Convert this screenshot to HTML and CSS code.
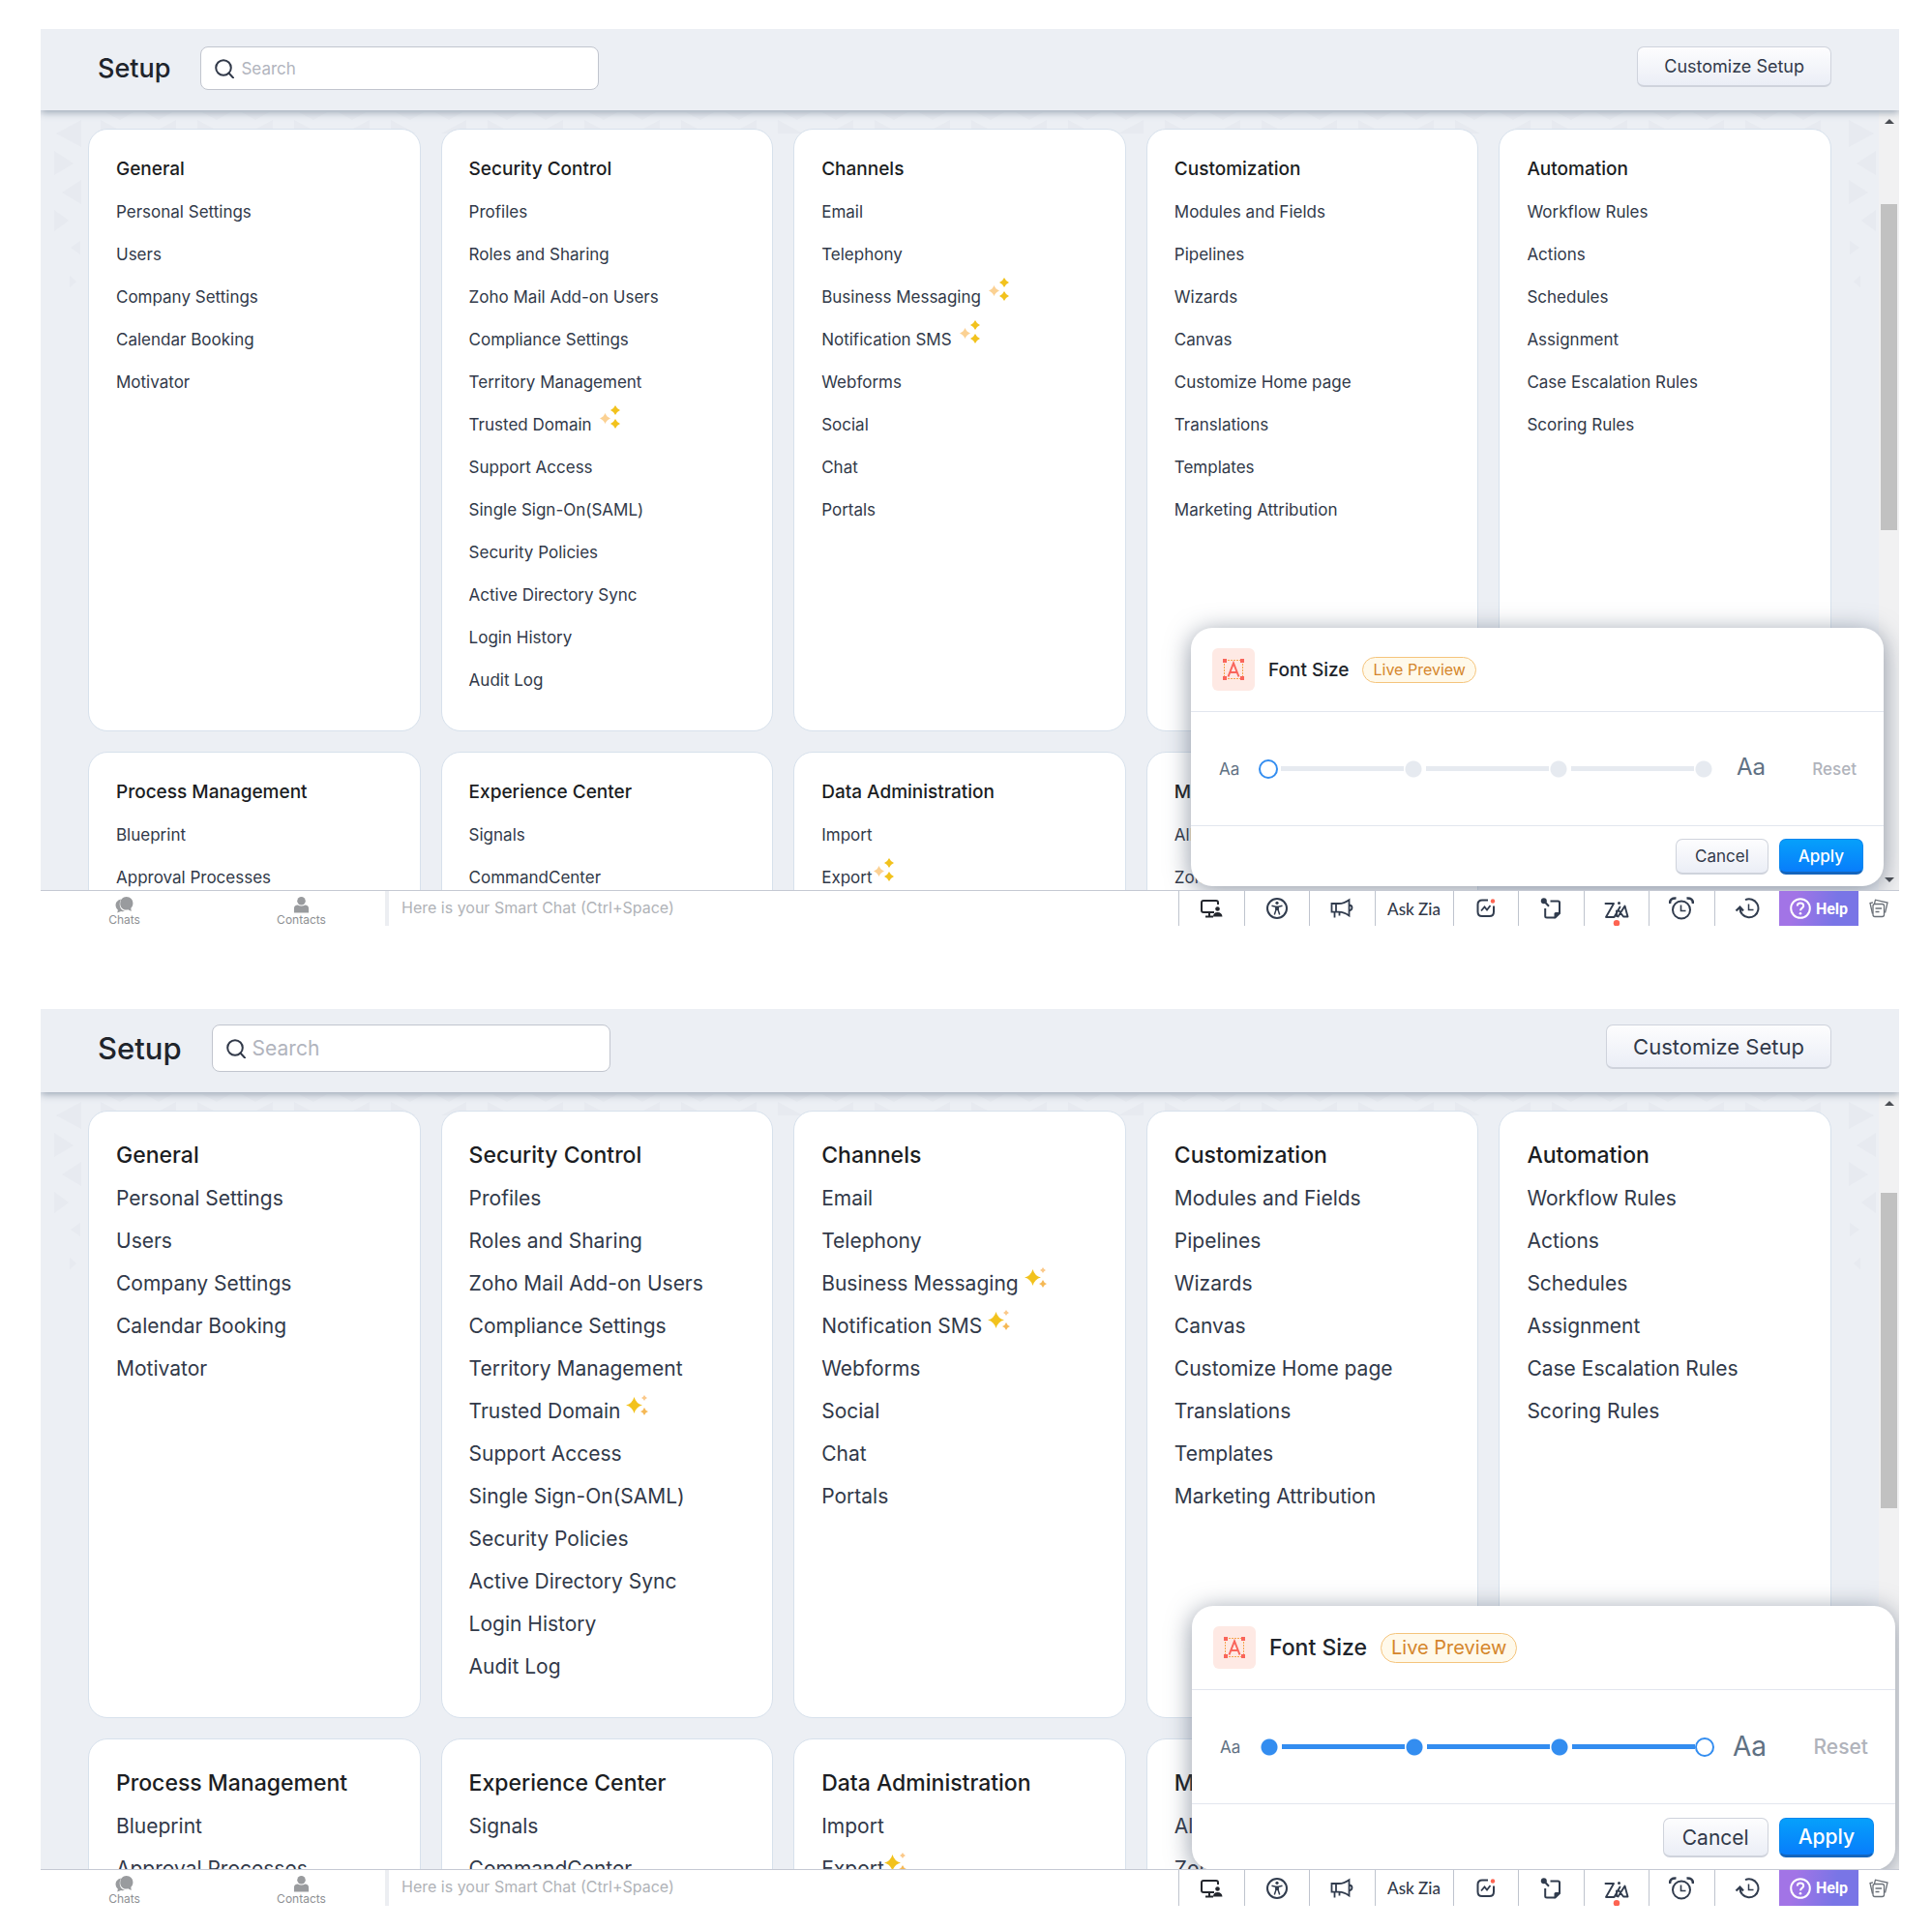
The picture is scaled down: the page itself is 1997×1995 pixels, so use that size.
FILE: index.html
```html
<!DOCTYPE html>
<html lang="en">
<head>
<meta charset="utf-8">
<meta name="viewport" content="width=device-width, initial-scale=1">
<title>Setup</title>
<link rel="stylesheet" href="styles.css">
</head>
<body>
<svg class="defs" aria-hidden="true">
  <symbol id="i-search" viewBox="0 0 20 20"><g fill="none" stroke="currentColor" stroke-width="2"><circle cx="9" cy="9" r="7.8"/><path d="M14.5 14.5 19 19.4" stroke-linecap="round"/></g></symbol>
  <symbol id="i-spark-s" viewBox="0 0 21 25"><path fill="#fbd193" d="M5.500 8Q7 12 11 13.500 7 15 5.500 19 4 15 0 13.500 4 12 5.500 8Z"/><path fill="#f2c21d" d="M16 0Q17.500 3.500 21 5 17.500 6.500 16 10 14.500 6.500 11 5 14.500 3.500 16 0ZM16 14Q17.500 17.500 21 19 17.500 20.500 16 24 14.500 20.500 11 19 14.500 17.500 16 14Z"/></symbol>
  <symbol id="i-spark-l" viewBox="0 0 23 21"><path fill="#f2c21d" d="M8.500 2Q10.500 9 17 10.500 10.500 12 8.500 19 6.500 12 0 10.500 6.500 9 8.500 2Z"/><path fill="#fbc98a" d="M19 0Q19.800 2.200 22 3 19.800 3.800 19 6 18.200 3.800 16 3 18.200 2.200 19 0Z"/><path fill="#f5b855" d="M19 13Q20 16 23 17 20 18 19 21 18 18 15 17 18 16 19 13Z"/></symbol>
  <symbol id="i-font" viewBox="0 0 44 44"><path d="M12.500 13v18M31.500 13v18M13 12.500h18M13 31.500h18" stroke="#f5a64e" stroke-width="1" stroke-dasharray="2 1" fill="none"/><path d="M16.500 29.500 22 15.500 27.500 29.500M18.200 25h7.600" fill="none" stroke="#f9655b" stroke-width="2"/><path fill="#f9655b" d="M11 11h4v4h-4zM29 11h4v4h-4zM11 29h4v4h-4zM29 29h4v4h-4z"/></symbol>
  <symbol id="i-chats" viewBox="0 0 22 20"><path fill="#999b9e" d="M7 3C2 4 0 8 .6 11.500 1 13.500 2 15 3.200 16L2.500 19.500 7 17.600C9 18 10.500 17.800 11.500 17.300 5 16 4 8 7 3Z"/><path fill="#999b9e" d="M13.500 0C18.500 0 21.500 3.500 21.500 8 21.500 10.500 20.500 12.500 19 13.800L19.500 17.500 15.500 15.700C9 17 6 12.500 6 8.500 6 3.500 9 0 13.500 0Z"/></symbol>
  <symbol id="i-contact" viewBox="0 0 18 18"><circle cx="9" cy="4.500" r="4.500" fill="#999b9e"/><path fill="#999b9e" d="M1 17.500V13Q1 9 5 9 9 11 13 9 17 9 17 13V17.500Z"/></symbol>
  <symbol id="i-screen" viewBox="0 0 24 20"><path d="M15 14H4Q2 14 2 12V4Q2 2 4 2H17Q19 2 19 4V6M10 14v4M6 18.500h8" fill="none" stroke="#23262d" stroke-width="2"/><circle cx="18.500" cy="10.500" r="2.300" fill="#23262d"/><path d="M14 18.500Q14 14 18.500 14T23.500 18.500Z" fill="#23262d"/></symbol>
  <symbol id="i-access" viewBox="0 0 24 24"><circle cx="12" cy="12" r="10" fill="none" stroke="#313c4e" stroke-width="2"/><circle cx="12" cy="6.300" r="1.600" fill="#313c4e"/><path d="M6.500 9.300 10.500 10.200h3L17.500 9.300M10.800 10.500V14L9.300 18.500M13.200 10.500V14L14.700 18.500M12 10.500V14" fill="none" stroke="#313c4e" stroke-width="1.500"/></symbol>
  <symbol id="i-horn" viewBox="0 0 24 22"><path d="M1.500 6H9Q14 6 19.500 2.200V18.500Q14 14.700 9 14.700H1.500ZM6 6v8.500M4.500 15v5.500M9.500 15v3.500M20 7.500Q22.500 8 22.500 10.300T20 13.300" fill="none" stroke="#313c4e" stroke-width="1.800"/></symbol>
  <symbol id="i-chart" viewBox="0 0 22 22"><path d="M13 2.500H7Q2.500 2.500 2.500 7V14.500Q2.500 19 7 19H14.500Q19 19 19 14.500V8.500" fill="none" stroke="#313c4e" stroke-width="2"/><path d="M6 13.500 9.500 9.500 12 12.500 15.500 8" fill="none" stroke="#313c4e" stroke-width="1.800"/><circle cx="18" cy="3.500" r="2.200" fill="#fd6452"/></symbol>
  <symbol id="i-note" viewBox="0 0 22 24"><circle cx="3.800" cy="4.300" r="3" fill="#313c4e"/><path d="M4 4.500 9 9.800M10.500 4.500H18.500Q20 4.500 20 6V17L15.500 21.500H7Q5.200 21.500 5.200 20V12" fill="none" stroke="#313c4e" stroke-width="2"/><path d="M14.500 22.500V17.500Q14.500 16 16 16H21Z" fill="#313c4e"/></symbol>
  <symbol id="i-zia" viewBox="0 0 26 26"><path d="M1.500 3H10L2 17H10.500L16.500 6.500M13 10.500V16M14.500 16.500 21.500 5.500 24.500 16.500H20L15.500 10.500" fill="none" stroke="#313c4e" stroke-width="1.900" stroke-linejoin="round" stroke-linecap="round"/><circle cx="15.500" cy="2.500" r="1.500" fill="#313c4e"/><circle cx="13" cy="23.300" r="3.200" fill="#fd6452"/></symbol>
  <symbol id="i-alarm" viewBox="0 0 26 24"><circle cx="13" cy="13.500" r="9" fill="none" stroke="#313c4e" stroke-width="2"/><path d="M12.500 8.500V14.500H17.500" fill="none" stroke="#313c4e" stroke-width="1.600"/><path d="M1 7Q1 1 7.500 1.500M25 7Q25 1 18.500 1.500" fill="none" stroke="#313c4e" stroke-width="2.600"/></symbol>
  <symbol id="i-history" viewBox="0 0 26 24"><path d="M11 3.200A9.500 9.500 0 1 1 8 18.300" fill="none" stroke="#313c4e" stroke-width="2"/><path d="M14.500 7.500V13.500H19.500" fill="none" stroke="#313c4e" stroke-width="1.500"/><path d="M1.500 14.500 5.500 10.500 9 14.500M5.500 11.500Q5.500 15.500 8 18.300" fill="none" stroke="#313c4e" stroke-width="2.200"/></symbol>
  <symbol id="i-help" viewBox="0 0 22 22"><circle cx="11" cy="11" r="9.800" fill="none" stroke="#fff" stroke-width="2"/><path d="M7.800 8.500Q7.800 5.500 11 5.500T14.200 8.500C14.200 10.700 11 10.700 11 13.300" fill="none" stroke="#fff" stroke-width="2"/><circle cx="11" cy="16.200" r="1.300" fill="#fff"/></symbol>
  <symbol id="i-cards" viewBox="0 0 20 20"><g fill="none" stroke="#6a7078" stroke-width="1.300"><path d="M3.500 15.500 1 4.500 4 3.800M16.500 14.500 19 4 6.500 1.200 5.500 5"/><rect x="4" y="5.500" width="11.500" height="13" rx="2"/><path d="M6.500 10h6.500M6.500 13.500h4"/></g></symbol>
  <pattern id="tri-top" width="100" height="26" patternUnits="userSpaceOnUse"><path fill="#e7eaf0" d="M20 10 46 24H20ZM98 10V24H72ZM25 2H54L40 10ZM66 2H94L80 10Z"/></pattern>
  <symbol id="tri-side" viewBox="0 0 40 190"><path fill="#e7eaf0" d="M30 10V38L4 24ZM2 42 22 55 2 67ZM30 72V97L10 85ZM2 103 17 114 2 125ZM29 135V149L19 142ZM18 171 25 177 18 183Z"/></symbol>
</svg>

<main class="page">
  <section class="shot" aria-label="Setup, smallest font size">
    <header class="topbar">
      <h1 class="topbar-title">Setup</h1>
      <label class="search"><svg class="search-icon" aria-hidden="true"><use href="#i-search"/></svg><input type="search" placeholder="Search" aria-label="Search"></label>
      <button type="button" class="btn btn-customize">Customize Setup</button>
    </header>
    <div class="viewport">
      <svg class="deco deco-top" aria-hidden="true"><rect width="100%" height="26" fill="url(#tri-top)"/></svg>
      <svg class="deco deco-left" aria-hidden="true"><use href="#tri-side"/></svg>
      <svg class="deco deco-right" aria-hidden="true"><use href="#tri-side"/></svg>
      <div class="board">
        <article class="card"><h2>General</h2><ul>
          <li><a href="#">Personal Settings</a></li><li><a href="#">Users</a></li><li><a href="#">Company Settings</a></li><li><a href="#">Calendar Booking</a></li><li><a href="#">Motivator</a></li></ul></article>
        <article class="card"><h2>Security Control</h2><ul>
          <li><a href="#">Profiles</a></li><li><a href="#">Roles and Sharing</a></li><li><a href="#">Zoho Mail Add-on Users</a></li><li><a href="#">Compliance Settings</a></li><li><a href="#">Territory Management</a></li><li><a href="#">Trusted Domain</a><svg class="spark" aria-hidden="true"><use href="#i-spark-s"/></svg></li><li><a href="#">Support Access</a></li><li><a href="#">Single Sign-On(SAML)</a></li><li><a href="#">Security Policies</a></li><li><a href="#">Active Directory Sync</a></li><li><a href="#">Login History</a></li><li><a href="#">Audit Log</a></li></ul></article>
        <article class="card"><h2>Channels</h2><ul>
          <li><a href="#">Email</a></li><li><a href="#">Telephony</a></li><li><a href="#">Business Messaging</a><svg class="spark" aria-hidden="true"><use href="#i-spark-s"/></svg></li><li><a href="#">Notification SMS</a><svg class="spark" aria-hidden="true"><use href="#i-spark-s"/></svg></li><li><a href="#">Webforms</a></li><li><a href="#">Social</a></li><li><a href="#">Chat</a></li><li><a href="#">Portals</a></li></ul></article>
        <article class="card"><h2>Customization</h2><ul>
          <li><a href="#">Modules and Fields</a></li><li><a href="#">Pipelines</a></li><li><a href="#">Wizards</a></li><li><a href="#">Canvas</a></li><li><a href="#">Customize Home page</a></li><li><a href="#">Translations</a></li><li><a href="#">Templates</a></li><li><a href="#">Marketing Attribution</a></li></ul></article>
        <article class="card"><h2>Automation</h2><ul>
          <li><a href="#">Workflow Rules</a></li><li><a href="#">Actions</a></li><li><a href="#">Schedules</a></li><li><a href="#">Assignment</a></li><li><a href="#">Case Escalation Rules</a></li><li><a href="#">Scoring Rules</a></li></ul></article>
        <article class="card"><h2>Process Management</h2><ul>
          <li><a href="#">Blueprint</a></li><li><a href="#">Approval Processes</a></li></ul></article>
        <article class="card"><h2>Experience Center</h2><ul>
          <li><a href="#">Signals</a></li><li><a href="#">CommandCenter</a></li></ul></article>
        <article class="card"><h2>Data Administration</h2><ul>
          <li><a href="#">Import</a></li><li class="tight"><a href="#">Export</a><svg class="spark" aria-hidden="true"><use href="#i-spark-s"/></svg></li></ul></article>
        <article class="card"><h2>Marketplace</h2><ul>
          <li><a href="#">All</a></li><li><a href="#">Zoho</a></li></ul></article>
      </div>
      <div class="scrollbar" aria-hidden="true"><span class="arrow arrow-up"></span><span class="thumb"></span><span class="arrow arrow-down"></span></div>
      <div class="dialog" role="dialog" aria-label="Font Size">
        <div class="dialog-head"><svg class="dialog-icon" aria-hidden="true"><use href="#i-font"/></svg><h2>Font Size</h2><span class="pill">Live Preview</span></div>
        <div class="dialog-body"><span class="aa-small">Aa</span><input class="steps" type="range" min="0" max="3" step="1" value="0" aria-label="Font size"><span class="aa-big">Aa</span><button type="button" class="reset">Reset</button></div>
        <div class="dialog-foot"><button type="button" class="btn btn-cancel">Cancel</button><button type="button" class="btn btn-apply">Apply</button></div>
      </div>
    </div>
    <footer class="dock">
      <nav class="dock-tabs"><a href="#"><svg class="ic-chats" aria-hidden="true"><use href="#i-chats"/></svg>Chats</a><a href="#"><svg class="ic-contact" aria-hidden="true"><use href="#i-contact"/></svg>Contacts</a></nav>
      <input class="chat" type="text" placeholder="Here is your Smart Chat (Ctrl+Space)" aria-label="Smart Chat">
      <div class="tools">
        <button type="button" aria-label="Screen share"><svg width="24" height="20"><use href="#i-screen"/></svg></button>
        <button type="button" aria-label="Accessibility"><svg width="24" height="24"><use href="#i-access"/></svg></button>
        <button type="button" aria-label="Announcements"><svg width="24" height="22"><use href="#i-horn"/></svg></button>
        <button type="button" class="ask">Ask Zia</button>
        <button type="button" aria-label="Reports"><svg width="22" height="22"><use href="#i-chart"/></svg></button>
        <button type="button" aria-label="Notes"><svg width="22" height="24"><use href="#i-note"/></svg></button>
        <button type="button" aria-label="Zia" class="low"><svg width="26" height="26"><use href="#i-zia"/></svg></button>
        <button type="button" aria-label="Reminders"><svg width="26" height="24"><use href="#i-alarm"/></svg></button>
        <button type="button" aria-label="Recent items"><svg width="26" height="24"><use href="#i-history"/></svg></button>
      </div>
      <button type="button" class="help"><svg width="22" height="22" aria-hidden="true"><use href="#i-help"/></svg>Help</button>
      <button type="button" class="more" aria-label="Cards"><svg width="20" height="20"><use href="#i-cards"/></svg></button>
    </footer>
  </section>

  <section class="shot shot-large" aria-label="Setup, largest font size">
    <header class="topbar">
      <h1 class="topbar-title">Setup</h1>
      <label class="search"><svg class="search-icon" aria-hidden="true"><use href="#i-search"/></svg><input type="search" placeholder="Search" aria-label="Search"></label>
      <button type="button" class="btn btn-customize">Customize Setup</button>
    </header>
    <div class="viewport">
      <svg class="deco deco-top" aria-hidden="true"><rect width="100%" height="26" fill="url(#tri-top)"/></svg>
      <svg class="deco deco-left" aria-hidden="true"><use href="#tri-side"/></svg>
      <svg class="deco deco-right" aria-hidden="true"><use href="#tri-side"/></svg>
      <div class="board">
        <article class="card"><h2>General</h2><ul>
          <li><a href="#">Personal Settings</a></li><li><a href="#">Users</a></li><li><a href="#">Company Settings</a></li><li><a href="#">Calendar Booking</a></li><li><a href="#">Motivator</a></li></ul></article>
        <article class="card"><h2>Security Control</h2><ul>
          <li><a href="#">Profiles</a></li><li><a href="#">Roles and Sharing</a></li><li><a href="#">Zoho Mail Add-on Users</a></li><li><a href="#">Compliance Settings</a></li><li><a href="#">Territory Management</a></li><li><a href="#">Trusted Domain</a><svg class="spark" aria-hidden="true"><use href="#i-spark-l"/></svg></li><li><a href="#">Support Access</a></li><li><a href="#">Single Sign-On(SAML)</a></li><li><a href="#">Security Policies</a></li><li><a href="#">Active Directory Sync</a></li><li><a href="#">Login History</a></li><li><a href="#">Audit Log</a></li></ul></article>
        <article class="card"><h2>Channels</h2><ul>
          <li><a href="#">Email</a></li><li><a href="#">Telephony</a></li><li><a href="#">Business Messaging</a><svg class="spark" aria-hidden="true"><use href="#i-spark-l"/></svg></li><li><a href="#">Notification SMS</a><svg class="spark" aria-hidden="true"><use href="#i-spark-l"/></svg></li><li><a href="#">Webforms</a></li><li><a href="#">Social</a></li><li><a href="#">Chat</a></li><li><a href="#">Portals</a></li></ul></article>
        <article class="card"><h2>Customization</h2><ul>
          <li><a href="#">Modules and Fields</a></li><li><a href="#">Pipelines</a></li><li><a href="#">Wizards</a></li><li><a href="#">Canvas</a></li><li><a href="#">Customize Home page</a></li><li><a href="#">Translations</a></li><li><a href="#">Templates</a></li><li><a href="#">Marketing Attribution</a></li></ul></article>
        <article class="card"><h2>Automation</h2><ul>
          <li><a href="#">Workflow Rules</a></li><li><a href="#">Actions</a></li><li><a href="#">Schedules</a></li><li><a href="#">Assignment</a></li><li><a href="#">Case Escalation Rules</a></li><li><a href="#">Scoring Rules</a></li></ul></article>
        <article class="card"><h2>Process Management</h2><ul>
          <li><a href="#">Blueprint</a></li><li><a href="#">Approval Processes</a></li></ul></article>
        <article class="card"><h2>Experience Center</h2><ul>
          <li><a href="#">Signals</a></li><li><a href="#">CommandCenter</a></li></ul></article>
        <article class="card"><h2>Data Administration</h2><ul>
          <li><a href="#">Import</a></li><li class="tight"><a href="#">Export</a><svg class="spark" aria-hidden="true"><use href="#i-spark-l"/></svg></li></ul></article>
        <article class="card"><h2>Marketplace</h2><ul>
          <li><a href="#">All</a></li><li><a href="#">Zoho</a></li></ul></article>
      </div>
      <div class="scrollbar" aria-hidden="true"><span class="arrow arrow-up"></span><span class="thumb"></span></div>
      <div class="dialog" role="dialog" aria-label="Font Size">
        <div class="dialog-head"><svg class="dialog-icon" aria-hidden="true"><use href="#i-font"/></svg><h2>Font Size</h2><span class="pill">Live Preview</span></div>
        <div class="dialog-body"><span class="aa-small">Aa</span><input class="steps" type="range" min="0" max="3" step="1" value="3" aria-label="Font size"><span class="aa-big">Aa</span><button type="button" class="reset">Reset</button></div>
        <div class="dialog-foot"><button type="button" class="btn btn-cancel">Cancel</button><button type="button" class="btn btn-apply">Apply</button></div>
      </div>
    </div>
    <footer class="dock">
      <nav class="dock-tabs"><a href="#"><svg class="ic-chats" aria-hidden="true"><use href="#i-chats"/></svg>Chats</a><a href="#"><svg class="ic-contact" aria-hidden="true"><use href="#i-contact"/></svg>Contacts</a></nav>
      <input class="chat" type="text" placeholder="Here is your Smart Chat (Ctrl+Space)" aria-label="Smart Chat">
      <div class="tools">
        <button type="button" aria-label="Screen share"><svg width="24" height="20"><use href="#i-screen"/></svg></button>
        <button type="button" aria-label="Accessibility"><svg width="24" height="24"><use href="#i-access"/></svg></button>
        <button type="button" aria-label="Announcements"><svg width="24" height="22"><use href="#i-horn"/></svg></button>
        <button type="button" class="ask">Ask Zia</button>
        <button type="button" aria-label="Reports"><svg width="22" height="22"><use href="#i-chart"/></svg></button>
        <button type="button" aria-label="Notes"><svg width="22" height="24"><use href="#i-note"/></svg></button>
        <button type="button" aria-label="Zia" class="low"><svg width="26" height="26"><use href="#i-zia"/></svg></button>
        <button type="button" aria-label="Reminders"><svg width="26" height="24"><use href="#i-alarm"/></svg></button>
        <button type="button" aria-label="Recent items"><svg width="26" height="24"><use href="#i-history"/></svg></button>
      </div>
      <button type="button" class="help"><svg width="22" height="22" aria-hidden="true"><use href="#i-help"/></svg>Help</button>
      <button type="button" class="more" aria-label="Cards"><svg width="20" height="20"><use href="#i-cards"/></svg></button>
    </footer>
  </section>
</main>
</body>
</html>
```
FILE: styles.css
```css
*, *::before, *::after { box-sizing: border-box; }
body { margin: 0; background: #fff; color: #313949; font-family: Inter, "Liberation Sans", sans-serif; }
h1, h2, ul { margin: 0; padding: 0; }
h1, h2 { font-weight: 500; }
ul { list-style: none; }
a { color: inherit; text-decoration: none; }
button, input { font: inherit; color: inherit; margin: 0; padding: 0; border: 0; background: none; outline: 0; }
.defs { position: absolute; width: 0; height: 0; }

.page { display: flex; flex-direction: column; gap: 86px; padding: 30px 34px 24px 42px; }

/* Sizes for the smallest step; .shot-large holds the largest step. */
.shot {
  --text: 17px;
  --heading: 19px;
  --label: 18px;
  --pill: 16px;
  --title: 27px;
  --aa: 24px;
  --bar: 84px;
  --card-top: 19px;
  --card-pad: 19px;
  --card-end: 30px;
  --view: 806px;
  --field: 45px;
  --button: 42px;
}
.shot-large {
  --text: 21px;
  --heading: 23px;
  --label: 22px;
  --pill: 20px;
  --title: 31px;
  --aa: 28px;
  --bar: 86px;
  --card-top: 19px;
  --card-pad: 23px;
  --card-end: 31px;
  --view: 803px;
  --field: 49px;
  --button: 46px;
}

.topbar { position: relative; z-index: 2; display: flex; align-items: flex-start; height: var(--bar); padding: 18px 70px 0 59px; background: #eceff4; box-shadow: 0 2px 8px #96a2b1; clip-path: inset(0 0 -14px 0); }
.shot-large .topbar { padding-top: 16px; }
.topbar-title { margin-right: 31px; color: #20242b; font-size: var(--title); line-height: var(--field); }
.search { display: flex; align-items: center; gap: 7px; width: 412px; height: var(--field); padding: 0 14px; background: #fff; border: 1px solid #c1c5ce; border-radius: 8px; }
.search-icon { width: 20px; height: 20px; color: #313949; }
.search input { flex: 1; min-width: 0; font-size: var(--text); appearance: none; }
.search input::placeholder { color: #b1b4bd; opacity: 1; }
.btn { border: 1px solid #cfd3dc; border-bottom-width: 2px; border-radius: 7px; background: linear-gradient(#fdfdfe, #ebeef6); color: #313949; }
.btn-customize { height: var(--button); margin-left: auto; padding: 0 27px; font-size: var(--label); }

.viewport { position: relative; display: flex; height: var(--view); overflow: hidden; background: #eceff4; }
.deco { position: absolute; top: 0; }
.deco-top { left: 42px; width: calc(100% - 105px); height: 26px; }
.deco-left { left: 12px; width: 40px; height: 190px; }
.deco-right { right: 22px; width: 40px; height: 190px; transform: scaleX(-1); }
.board { position: relative; flex: 1; display: grid; grid-template-columns: repeat(5, 1fr); align-content: start; gap: 21px; padding: var(--card-top) 49px 0; }
.card { padding: var(--card-pad) 28px var(--card-end); background: #fff; border: 1px solid #d7e1ec; border-radius: 20px; }
.card h2 { color: #1b1d22; font-size: var(--heading); line-height: 44px; white-space: nowrap; }
.card li { display: flex; align-items: center; gap: 8px; height: 44px; font-size: var(--text); white-space: nowrap; }
.card .tight { gap: 1px; }
.spark { width: 21px; height: 25px; margin-bottom: 16px; }
.shot-large .card li { gap: 6px; }
.shot-large .card .tight { gap: 0; }
.shot-large .spark { width: 23px; height: 21px; margin-bottom: 12px; }

.scrollbar { position: relative; width: 21px; background: #f1f1f2; display: flex; flex-direction: column; align-items: center; padding: 9px 0 8px; }
.arrow { border: 5px solid transparent; }
.arrow-up { border-top: 0; border-bottom-color: #4a4d52; }
.arrow-down { border-bottom: 0; border-top-color: #4a4d52; margin-top: auto; }
.thumb { width: 17px; height: 337px; margin-top: 83px; background: #c1c1c1; }
.shot-large .thumb { height: 326px; margin-top: 90px; }

.dialog { position: absolute; right: 16px; bottom: 4px; width: 716px; background: #fff; border-radius: 22px; box-shadow: 0 4px 26px rgba(70, 84, 105, .6); }
.shot-large .dialog { right: 4px; bottom: -1px; width: 727px; }
.dialog-head { display: flex; align-items: center; height: 87px; padding: 0 22px; border-bottom: 1px solid #e2e6ee; }
.dialog-icon { width: 44px; height: 44px; margin-right: 14px; background: #fee9e4; border-radius: 6px; }
.dialog-head h2 { margin-right: 14px; color: #20242b; font-size: var(--heading); }
.pill { padding: 0 10px; border: 1px solid #f5c47c; border-radius: 16px; background: #fff9ea; color: #d5862c; font-size: var(--pill); line-height: 25px; }
.shot-large .pill { line-height: 29px; }
.dialog-body { display: flex; align-items: center; height: 118px; padding: 0 28px 0 29px; color: #5f7183; border-bottom: 1px solid #e2e6ee; }
.aa-small { width: 41px; font-size: 17px; }
.aa-big { margin-left: 24px; padding-bottom: 4px; font-size: var(--aa); }
.shot-large .aa-big { margin-left: 19px; padding-bottom: 2px; }
.reset { margin-left: auto; color: #b0b3bb; font-size: var(--text); font-weight: 500; }
.steps {
  --fill: #e6eaf0;
  appearance: none; width: 470px; height: 20px;
  background:
    radial-gradient(circle at center, var(--fill) 8px, transparent 9px) -65px 0 / 150px 20px repeat-x,
    linear-gradient(90deg, transparent 13px, var(--fill) 13px, var(--fill) 140px, transparent 140px) 10px 50% / 150px 5px repeat-x;
}
.shot-large .steps { --fill: #338df0; }
.steps::-webkit-slider-thumb { appearance: none; width: 20px; height: 20px; border: 2px solid #338df0; border-radius: 50%; background: #fff; }
.dialog-foot { display: flex; justify-content: flex-end; gap: 11px; padding: 13px 21px 12px; }
.shot-large .dialog-foot { padding: 14px 22px 13px; }
.btn-cancel, .btn-apply { height: 37px; padding: 0 19px; font-size: var(--text); }
.btn-apply { border-color: #0a86ee; border-bottom: 3px solid #1465bd; background: linear-gradient(#06a0fb, #087dfb); color: #fff; font-weight: 500; }
.shot-large .btn-cancel, .shot-large .btn-apply { height: 41px; }

.dock { display: flex; height: 37px; background: #fff; border-top: 1px solid #c5c9d3; }
.shot-large .dock { height: 38px; }
.dock-tabs { display: grid; grid-template-columns: 173px 183px; width: 356px; }
.dock-tabs a { display: flex; flex-direction: column; align-items: center; padding-top: 6px; color: #8d9093; font-size: 12px; line-height: 14px; }
.dock-tabs a:last-child { padding-left: 10px; }
.ic-chats { width: 21px; height: 17px; }
.ic-contact { width: 17px; height: 17px; }
.chat { flex: 1; min-width: 0; padding: 0 0 3px 13px; border-left: 4px solid #eceef2; font-size: 16px; }
.chat::placeholder { color: #b0b3b8; opacity: 1; }
.tools { display: grid; grid-template-columns: repeat(3, 1fr) 81px repeat(5, 1fr); width: 621px; }
.tools button { display: flex; align-items: center; justify-content: center; border-left: 1px solid #bfc4ce; }
.tools .low { align-items: flex-end; }
.tools .ask { font-family: Lato, sans-serif; font-size: 17px; font-weight: 500; }
.help { display: flex; align-items: center; justify-content: center; gap: 5px; width: 82px; background: linear-gradient(100deg, #a274e6 20%, #7975e6 70%); color: #fff; font-family: Roboto, sans-serif; font-size: 16px; font-weight: 700; }
.more { display: flex; align-items: center; justify-content: center; width: 42px; }
```
